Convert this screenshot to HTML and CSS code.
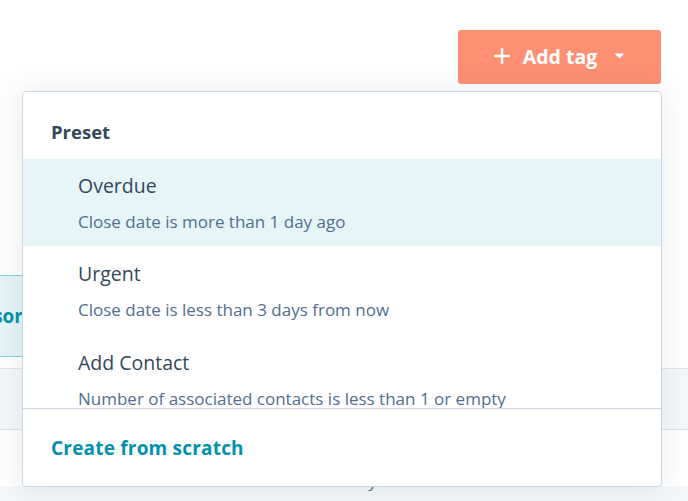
FILE: index.html
```html
<!DOCTYPE html>
<html>
<head>
<meta charset="utf-8">
<link rel="stylesheet" href="styles.css">
</head>
<body>
<div class="page">
  <header class="toolbar">
    <button class="add-tag">
      <svg class="plus" width="16" height="16" viewBox="0 0 16 16"><path d="M8 1v14M1 8h14" stroke="#fff" stroke-width="2.4" stroke-linecap="round"/></svg>
      <span>Add tag</span>
      <svg class="caret" width="11" height="6" viewBox="0 0 11 6"><path d="M0.5 0.5h10L5.5 5.5z" fill="#fff"/></svg>
    </button>
  </header>
  <main class="board">
    <div class="spacer"></div>
    <div class="stage-tab">Sponsor</div>
    <div class="gap"></div>
    <div class="row-gray"></div>
    <div class="row-white"></div>
    <div class="row-foot"><span class="foot-label">Consultancy</span></div>
  </main>
</div>

<div class="dropdown">
  <div class="dd-head">Preset</div>
  <ul class="dd-list">
    <li class="dd-item active">
      <div class="dd-title">Overdue</div>
      <div class="dd-desc">Close date is more than 1 day ago</div>
    </li>
    <li class="dd-item">
      <div class="dd-title">Urgent</div>
      <div class="dd-desc">Close date is less than 3 days from now</div>
    </li>
    <li class="dd-item">
      <div class="dd-title">Add Contact</div>
      <div class="dd-desc">Number of associated contacts is less than 1 or empty</div>
    </li>
  </ul>
  <div class="dd-foot">Create from scratch</div>
</div>
</body>
</html>
```

FILE: styles.css
```css
* { box-sizing: border-box; }
html, body { margin: 0; padding: 0; }
body {
  width: 688px;
  height: 501px;
  overflow: hidden;
  background: #fff;
  font-family: "Open Sans", "Noto Sans", sans-serif;
  color: #33475b;
  position: relative;
}
.page { display: flex; flex-direction: column; height: 501px; }
.toolbar {
  height: 91px;
  display: flex;
  justify-content: flex-end;
  align-items: flex-start;
  padding: 30px 27px 0 0;
}
.add-tag {
  width: 203px;
  height: 54px;
  border: none;
  border-radius: 3px;
  background: #ff8f73;
  color: #fff;
  font-family: inherit;
  font-weight: 700;
  font-size: 19.5px;
  display: flex;
  align-items: center;
  justify-content: center;
  padding: 0 0 2px 0;
}
.add-tag .plus { margin-right: 13px; }
.add-tag .caret { margin-left: 17px; }
.board { flex: 1; display: flex; flex-direction: column; }
.spacer { height: 184px; }
.stage-tab {
  height: 82px;
  width: 140px;
  margin-left: -98px;
  padding-right: 19px;
  background: #e5f5f8;
  border-top: 1px solid #7fd1de;
  border-bottom: 1px solid #7fd1de;
  color: #0091ae;
  font-weight: 700;
  font-size: 19px;
  display: flex;
  align-items: center;
  justify-content: flex-end;
}
.gap { height: 11px; background: #fff; }
.row-gray {
  height: 62px;
  background: #f5f8fa;
  border-top: 1px solid #dfe3eb;
  border-bottom: 1px solid #dfe3eb;
}
.row-white { height: 56px; }
.row-foot {
  flex: 1;
  background: #f5f8fa;
  position: relative;
}
.foot-label {
  position: absolute;
  left: 280px;
  top: -17px;
  font-size: 17px;
  color: #516f90;
}
.dropdown {
  position: absolute;
  left: 22px;
  top: 91px;
  width: 640px;
  height: 396px;
  background: #fff;
  border: 1px solid #cbd6e2;
  border-radius: 4px;
  box-shadow: 0 2px 28px 4px rgba(45, 62, 80, 0.09);
  display: flex;
  flex-direction: column;
  overflow: hidden;
}
.dd-head {
  height: 67px;
  padding: 28px 0 0 28px;
  font-size: 18.5px;
  font-weight: 700;
  line-height: 24px;
  color: #33475b;
}
.dd-list {
  list-style: none;
  margin: 0;
  padding: 0;
  height: 249px;
  overflow: hidden;
}
.dd-item {
  height: 89px;
  padding: 16px 0 0 55px;
}
.dd-item.active { background: #e5f5f8; height: 87px; padding-top: 15px; }
.dd-title { font-size: 19.5px; line-height: 24px; color: #33475b; }
.dd-desc { margin-top: 12px; font-size: 17px; line-height: 24px; color: #516f90; }
.dd-foot {
  flex: 1;
  border-top: 1px solid #cbd6e2;
  padding: 27px 0 0 28px;
  font-size: 19px;
  line-height: 24px;
  font-weight: 700;
  letter-spacing: 0.2px;
  color: #0091ae;
}
```
